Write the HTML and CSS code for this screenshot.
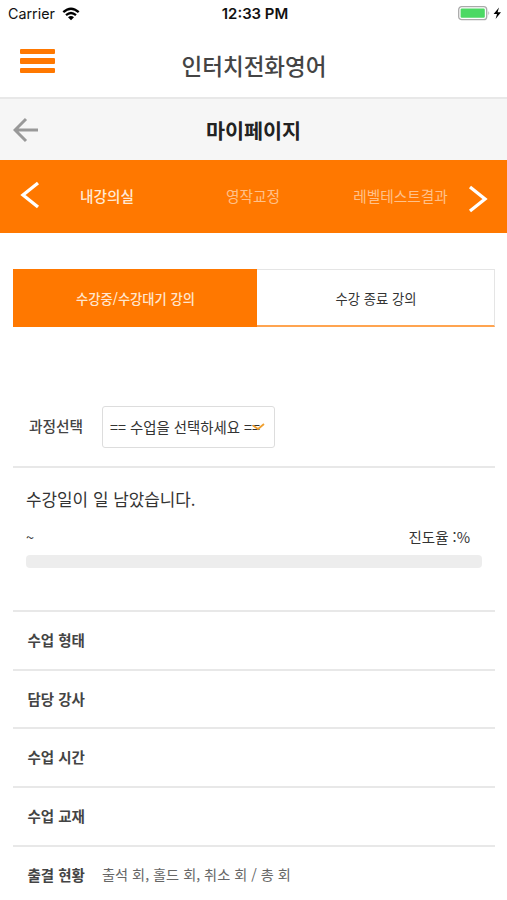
FILE: index.html
```html
<!DOCTYPE html>
<html lang="ko">
<head>
<meta charset="utf-8">
<meta name="viewport" content="width=device-width">
<title>마이페이지</title>
<link rel="stylesheet" href="styles.css">
</head>
<body>
<div class="status">
  <div class="status-left"><span class="carrier">Carrier</span>
    <svg width="18" height="14" viewBox="0 0 18 14" fill="none" stroke="#000"><path d="M1.3 5.2Q9-1.8 16.7 5.2" stroke-width="2.3"/><path d="M4 8.2Q9 3.8 14 8.2" stroke-width="2.2"/><path d="M6 10.3Q9 7.8 12 10.3L9 13.2Z" fill="#000" stroke="none"/></svg>
  </div>
  <span class="clock">12:33 PM</span>
  <div class="status-right">
    <svg width="44" height="15" viewBox="0 0 44 15"><rect x=".7" y=".7" width="28" height="13" rx="3" fill="#fff" stroke="#aaa" stroke-width="1.3"/><rect x="2.6" y="2.6" width="24.2" height="9.2" rx="1.2" fill="#4cd964"/><path d="M30.5 5Q32.2 7.2 30.5 9.4Z" fill="#999"/><path d="M41 1.4L35.6 8H39L37.6 13L43 6.2H39.6Z" fill="#000"/></svg>
  </div>
</div>
<header class="brand">
  <div class="menu"><i></i><i></i><i></i></div>
  <h1>인터치전화영어</h1>
</header>
<div class="page-bar">
  <svg class="back" width="26" height="26" viewBox="0 0 26 26" fill="none" stroke="#999" stroke-width="3"><path d="M13 2L2 13L13 24M2 13H25"/></svg>
  <h2>마이페이지</h2>
</div>
<nav class="nav">
  <svg class="prev" width="20" height="28" viewBox="0 0 20 28" fill="none" stroke="#fff" stroke-width="3.3"><path d="M18 2L3 14L18 26"/></svg>
  <a class="current">내강의실</a><a>영작교정</a><a>레벨테스트결과</a>
  <svg class="next" width="20" height="28" viewBox="0 0 20 28" fill="none" stroke="#fff" stroke-width="3.3"><path d="M2 2L17 14L2 26"/></svg>
</nav>
<main>
  <div class="tabs"><div class="tab on">수강중/수강대기 강의</div><div class="tab">수강 종료 강의</div></div>
  <div class="course">
    <label>과정선택</label>
    <div class="select"><span>== 수업을 선택하세요 ==</span>
      <svg class="check" width="13" height="8" viewBox="0 0 13 8" fill="none" stroke="#f0a030" stroke-width="1.8"><path d="M1 2.5L6 6L12 1"/></svg>
    </div>
  </div>
  <section class="progress">
    <p class="remain">수강일이 일 남았습니다.</p>
    <div class="range"><span>~</span><span>진도율 :%</span></div>
    <div class="bar"></div>
  </section>
  <dl class="info">
    <div><dt>수업 형태</dt><dd></dd></div>
    <div><dt>담당 강사</dt><dd></dd></div>
    <div><dt>수업 시간</dt><dd></dd></div>
    <div><dt>수업 교재</dt><dd></dd></div>
    <div><dt>출결 현황</dt><dd>출석 회, 홀드 회, 취소 회 / 총 회</dd></div>
  </dl>
</main>
</body>
</html>
```
FILE: styles.css
```css
* { box-sizing: border-box; margin: 0; padding: 0; }
body { width: 507px; height: 900px; overflow: hidden; background: #fff; color: #333; font-family: "Noto Sans CJK KR", sans-serif; }
svg { display: block; flex: none; }
.status { height: 27px; display: grid; grid-template-columns: 1fr auto 1fr; align-items: center; padding: 0 5px 0 8px; font-family: Inter, "Liberation Sans", sans-serif; font-size: 14px; color: #111; }
.status-left { display: flex; align-items: center; gap: 7px; }
.carrier { font-size: 14.3px; }
.status-right { display: flex; justify-content: flex-end; }
.clock { font-weight: 600; font-size: 14.9px; }
.brand { height: 72px; border-bottom: 2px solid #e8e8e8; display: grid; grid-template-columns: 60px 1fr 60px; align-items: center; }
.menu { display: flex; flex-direction: column; gap: 4px; padding-left: 20px; width: 55px; margin-top: -2px; }
.menu i { height: 5.5px; background: #ff7800; border-radius: 1px; }
.brand h1 { font-size: 22.5px; font-weight: 500; text-align: center; line-height: 32px; padding: 5px 0 0 1px; color: #444; }
.page-bar { height: 61px; background: #f6f6f6; display: grid; grid-template-columns: 60px 1fr 60px; align-items: center; }
.back { margin-left: 13px; }
.page-bar h2 { font-size: 20.7px; font-weight: 700; text-align: center; color: #222; }
.nav { height: 73px; background: #ff7800; display: flex; align-items: center; padding: 0 19px 0 20px; font-size: 14.7px; color: #ffc18a; }
.nav a { flex: none; white-space: nowrap; margin-top: -2px; }
.nav .current { color: #ffead5; font-weight: 500; margin: -2px 92px 0 40px; }
.nav a:nth-of-type(3) { margin-left: 73px; }
.nav .next { margin-left: auto; margin-top: 4px; }
.nav .prev { margin-top: -3px; }
main { padding: 36px 12px 0 13px; }
.tabs { display: flex; height: 58px; font-size: 13.3px; }
.tab { flex: none; width: 238px; display: flex; align-items: center; justify-content: center; border: 1px solid #e5e5e5; border-left: 0; border-bottom: 2px solid #ffa450; padding: 1px 0 0 1px; }
.tab.on { width: 244px; background: #ff7800; color: #ffe6cf; border: 0; font-weight: 500; padding: 0 0 0 1px; }
.course { height: 141px; border-bottom: 2px solid #e8e8e8; display: flex; align-items: flex-end; padding: 0 0 18px 16px; gap: 19px; }
.course label { font-size: 14.7px; font-weight: 500; line-height: 42px; padding-bottom: 1px; color: #444; }
.select { position: relative; width: 173px; height: 42px; border: 1px solid #ddd; border-radius: 3px; font-size: 14.4px; line-height: 39px; padding-left: 7px; white-space: nowrap; }
.check { position: absolute; right: 9px; top: 16px; }
.progress { height: 142px; padding: 17px 13px 0 13px; }
.remain { font-size: 16.9px; line-height: 28px; }
.range { display: flex; justify-content: space-between; padding-right: 12px; margin-top: 12px; font-size: 14.5px; line-height: 24px; }
.bar { height: 13px; border-radius: 4px; background: #ededed; margin-top: 6px; }
.info div { height: 58.7px; border-top: 2px solid #e8e8e8; display: flex; align-items: center; padding: 0 0 2px 14.5px; font-size: 14.5px; }
.info dt { width: 74.5px; font-weight: 700; color: #444; }
.info dd { font-size: 14.2px; color: #666; }
```
